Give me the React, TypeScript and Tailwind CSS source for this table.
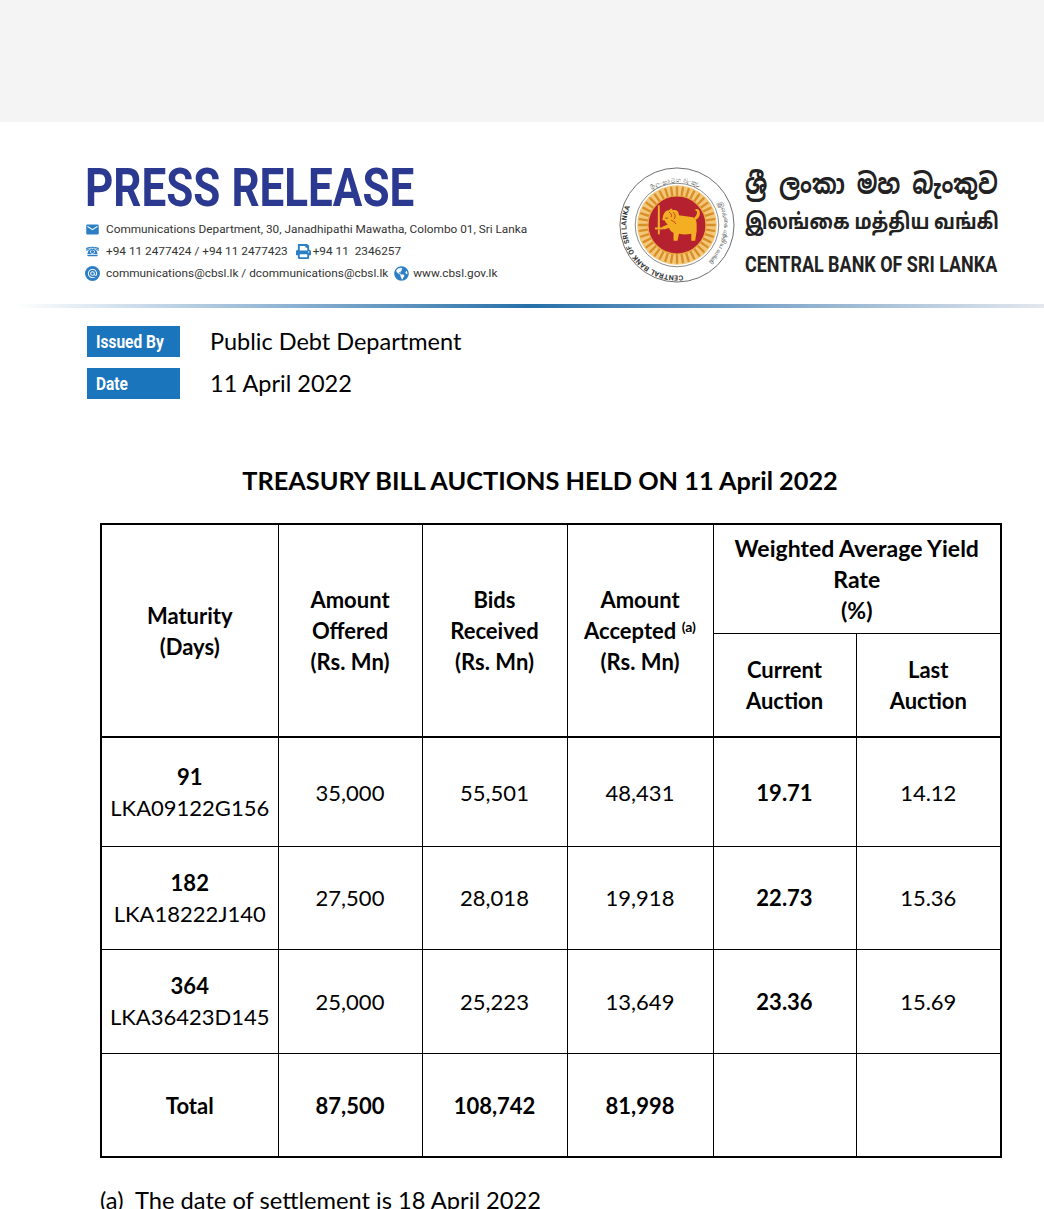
import { MdEmail, MdAlternateEmail } from "react-icons/md";
import { FaPrint, FaGlobeAmericas } from "react-icons/fa";
import { GiRotaryPhone } from "react-icons/gi";

const body = { fontFamily: "Lato, 'Open Sans', sans-serif" };
const roboto = { fontFamily: "Roboto, 'Liberation Sans', sans-serif" };

function Seal() {
    const rays = Array.from({ length: 40 }, (_, i) => i * 9);
    return (
        <svg viewBox="0 0 120 120" className="w-[118px] h-[118px] shrink-0">
            <defs>
                <path id="arcLeft" d="M 66 111 A 51 51 0 0 1 26 22" />
                <path id="arcTop" d="M 28 30 A 47 47 0 0 1 94 30" />
                <path id="arcRight" d="M 100 34 A 50 50 0 0 1 80 106" />
            </defs>
            <circle cx="60" cy="60" r="58" fill="#fff" stroke="#6b6b6b" strokeWidth="1" />
            <circle cx="60" cy="60" r="42.5" fill="#fff" stroke="#6b6b6b" strokeWidth="0.8" />
            <text fontSize="7.2" fontWeight="700" fill="#333" style={roboto} letterSpacing="0.2">
                <textPath href="#arcLeft">CENTRAL BANK OF SRI LANKA</textPath>
            </text>
            <text fontSize="6.4" fill="#333">
                <textPath href="#arcTop" startOffset="8">ශ්‍රී ලංකා මහ බැංකුව</textPath>
            </text>
            <text fontSize="6.4" fill="#333">
                <textPath href="#arcRight" startOffset="4">இலங்கை மத்திய வங்கி</textPath>
            </text>
            <circle cx="60" cy="60" r="40.5" fill="#f3c77a" />
            {rays.map((a) => (
                <rect
                    key={a}
                    x="58.8"
                    y="20.5"
                    width="2.4"
                    height="10.5"
                    rx="1.2"
                    fill="#d98f27"
                    transform={`rotate(${a} 60 60)`}
                />
            ))}
            <circle cx="60" cy="60" r="29.5" fill="#b5212f" stroke="#e9a83f" strokeWidth="1.2" />
            {/* sword */}
            <path d="M40.6 40 L42.4 40 L42.6 63 L40.4 63 Z" fill="#f3b12a" />
            <rect x="37.6" y="62.5" width="8" height="2" fill="#f3b12a" />
            <rect x="40.6" y="64.5" width="1.8" height="5" fill="#f3b12a" />
            {/* lion */}
            <path
                d="M46 50 C47 47 49 45 52 45 L54 43 L56 45 C59 44 62 46 62 50 C66 51 72 51 76 52 C79 53 80 56 80 59 L80 66 L78.5 76 L74.5 76 L74.5 69 C70 70 66 70 62 69 L60.5 76 L56.5 76 L56.5 68 C54 67 52.5 65 52 63 L46.5 64.5 L44.5 62 L50.5 59.5 C49 58 48 57 47.5 55.5 L45 55 L45.5 52.5 Z"
                fill="#f4ae22"
            />
            <path d="M79 55 C82 53 84 50 83 46 C82 43 79 43 78 45 C80 45 81 47 80 49 C79.5 51 78 52 77 53 Z" fill="#f4ae22" />
            <path
                d="M52 47 C54 48 55 50 54 52 M56 47 C58 49 59 51 57 54 M54 55 C56 56 58 57 59 59 M48 53 L51 53"
                stroke="#b5212f"
                strokeWidth="0.8"
                fill="none"
            />
        </svg>
    );
}

function Contact() {
    return (
        <div className="mt-[3px] text-[11.8px] leading-[22px] text-[#333]" style={roboto}>
            <div className="flex items-center gap-[6px]">
                <MdEmail className="w-[15px] h-[15px] text-[#2c7fc4]" />
                <span>Communications Department, 30, Janadhipathi Mawatha, Colombo 01, Sri Lanka</span>
            </div>
            <div className="flex items-center gap-[6px]">
                <GiRotaryPhone className="w-[15px] h-[15px] text-[#2c7fc4]" />
                <span>+94 11 2477424 / +94 11 2477423</span>
                <FaPrint className="w-[15px] h-[15px] text-[#2c7fc4] ml-[2px] -mr-[4px]" />
                <span>+94 11&nbsp; 2346257</span>
            </div>
            <div className="flex items-center gap-[6px]">
                <span className="flex items-center justify-center w-[15px] h-[15px] rounded-full bg-[#2c7fc4]">
                    <MdAlternateEmail className="w-[11px] h-[11px] text-white" />
                </span>
                <span>communications@cbsl.lk / dcommunications@cbsl.lk</span>
                <FaGlobeAmericas className="w-[15px] h-[15px] text-[#2c7fc4] -mr-[2px]" />
                <span>www.cbsl.gov.lk</span>
            </div>
        </div>
    );
}

const rows = [
    { days: "91", isin: "LKA09122G156", offered: "35,000", bids: "55,501", accepted: "48,431", current: "19.71", last: "14.12", h: "h-[109px]" },
    { days: "182", isin: "LKA18222J140", offered: "27,500", bids: "28,018", accepted: "19,918", current: "22.73", last: "15.36", h: "h-[103px]" },
    { days: "364", isin: "LKA36423D145", offered: "25,000", bids: "25,223", accepted: "13,649", current: "23.36", last: "15.69", h: "h-[104px]" },
];

export default function App() {
    return (
        <div className="bg-white text-black min-h-[1300px]" style={body}>
            <div className="h-[122px] bg-[#f4f4f4]" />

            {/* Letterhead */}
            <div className="flex justify-between pl-[85px] pr-[47px]">
                <div className="pt-[40px]">
                    <h1
                        className="text-[53px] leading-[53px] font-bold text-[#2b3990] origin-left scale-x-[0.83] whitespace-nowrap"
                        style={roboto}
                    >
                        PRESS RELEASE
                    </h1>
                    <Contact />
                </div>
                <div className="flex items-center gap-[9px] pt-[43px]">
                    <Seal />
                    <div className="flex flex-col w-[252px]">
                        <span
                            className="text-[28px] leading-[38px] font-bold text-[#222] origin-left scale-x-[0.84] whitespace-nowrap"
                            style={{ fontFamily: "'Noto Sans Sinhala', 'Iskoola Pota', 'Noto Sans', sans-serif" }}
                        >
                            ශ්‍රී ලංකා මහ බැංකුව
                        </span>
                        <span
                            className="text-[22px] leading-[42px] font-bold text-[#222] origin-left scale-x-[0.83] whitespace-nowrap"
                            style={{ fontFamily: "'Noto Sans Tamil', 'Latha', 'Noto Sans', sans-serif" }}
                        >
                            இலங்கை மத்திய வங்கி
                        </span>
                        <span
                            className="text-[21.5px] leading-[40px] font-bold text-[#222] origin-left scale-x-[0.835] whitespace-nowrap"
                            style={roboto}
                        >
                            CENTRAL BANK OF SRI LANKA
                        </span>
                    </div>
                </div>
            </div>

            {/* divider */}
            <div className="mt-[19px] ml-[15px] h-[4px] bg-gradient-to-r from-[#ffffff] via-[#2470a8] to-[#e4e8ee]" />

            {/* Issued by */}
            <div className="mt-[16px] pl-[87px] flex flex-col gap-[7px]">
                <div className="flex items-center">
                    <span className="w-[93px] h-[31px] bg-[#1b75bc] text-white font-bold text-[18px] px-[9px] flex items-center" style={roboto}>
                        <span className="origin-left scale-x-[0.86] whitespace-nowrap">Issued By</span>
                    </span>
                    <span className="ml-[30px] text-[23.5px]">Public Debt Department</span>
                </div>
                <div className="flex items-center">
                    <span className="w-[93px] h-[31px] bg-[#1b75bc] text-white font-bold text-[18px] px-[9px] flex items-center" style={roboto}>
                        <span className="origin-left scale-x-[0.86] whitespace-nowrap">Date</span>
                    </span>
                    <span className="ml-[30px] text-[23.5px]">11 April 2022</span>
                </div>
            </div>

            <h2 className="mt-[60px] text-center text-[25.3px] font-bold pl-[36px]">TREASURY BILL AUCTIONS HELD ON 11 April 2022</h2>

            <div className="mt-[24px] pl-[100px]">
                <table className="w-[900px] border-collapse border-2 border-black text-[22px] leading-[31px] text-center table-fixed">
                    <colgroup>
                        <col className="w-[177px]" />
                        <col className="w-[144px]" />
                        <col className="w-[145px]" />
                        <col className="w-[146px]" />
                        <col className="w-[143px]" />
                        <col className="w-[145px]" />
                    </colgroup>
                    <thead className="font-bold">
                        <tr className="h-[109px]">
                            <th rowSpan={2} className="border border-black">Maturity<br />(Days)</th>
                            <th rowSpan={2} className="border border-black">Amount<br />Offered<br />(Rs. Mn)</th>
                            <th rowSpan={2} className="border border-black">Bids<br />Received<br />(Rs. Mn)</th>
                            <th rowSpan={2} className="border border-black">
                                Amount<br />Accepted <sup className="text-[14px] font-bold">(a)</sup><br />(Rs. Mn)
                            </th>
                            <th colSpan={2} className="border border-black text-[23px]">Weighted Average Yield<br />Rate<br />(%)</th>
                        </tr>
                        <tr className="h-[104px] border-b-2 border-black">
                            <th className="border border-black">Current<br />Auction</th>
                            <th className="border border-black">Last<br />Auction</th>
                        </tr>
                    </thead>
                    <tbody>
                        {rows.map((r) => (
                            <tr key={r.days} className={r.h}>
                                <td className="border border-black">
                                    <div className="font-bold">{r.days}</div>
                                    <div>{r.isin}</div>
                                </td>
                                <td className="border border-black">{r.offered}</td>
                                <td className="border border-black">{r.bids}</td>
                                <td className="border border-black">{r.accepted}</td>
                                <td className="border border-black font-bold">{r.current}</td>
                                <td className="border border-black">{r.last}</td>
                            </tr>
                        ))}
                        <tr className="h-[104px] font-bold">
                            <td className="border border-black">Total</td>
                            <td className="border border-black">87,500</td>
                            <td className="border border-black">108,742</td>
                            <td className="border border-black">81,998</td>
                            <td className="border border-black" />
                            <td className="border border-black" />
                        </tr>
                    </tbody>
                </table>
            </div>

            <p className="mt-[25px] pl-[100px] text-[23.7px] whitespace-pre">(a)  The date of settlement is 18 April 2022</p>
        </div>
    );
}
